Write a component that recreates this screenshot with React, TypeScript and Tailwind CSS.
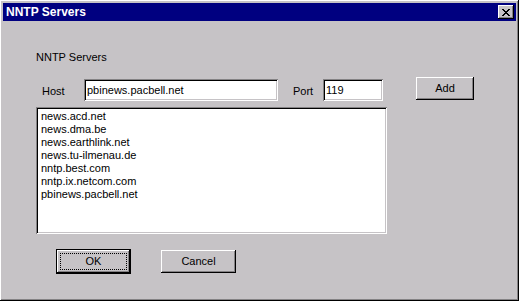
const servers = [
  'news.acd.net',
  'news.dma.be',
  'news.earthlink.net',
  'news.tu-ilmenau.de',
  'nntp.best.com',
  'nntp.ix.netcom.com',
  'pbinews.pacbell.net',
];

const raised =
  'shadow-[inset_-1px_-1px_#000,inset_1px_1px_#fff,inset_-2px_-2px_#848284,inset_2px_2px_#c6c3c6]';
const sunken =
  'shadow-[inset_1px_1px_#848284,inset_-1px_-1px_#fff,inset_2px_2px_#000,inset_-2px_-2px_#c6c3c6]';

function CloseGlyph() {
  // 8x7 pixel X, same as the classic caption button
  const rows = ['11000011', '01100110', '00111100', '00011000', '00111100', '01100110', '11000011'];
  return (
    <svg width="8" height="7" viewBox="0 0 8 7" shapeRendering="crispEdges">
      {rows.map((row, y) =>
        row.split('').map((c, x) =>
          c === '1' ? <rect key={`${x}-${y}`} x={x} y={y} width="1" height="1" fill="#000" /> : null
        )
      )}
    </svg>
  );
}

export default function App() {
  return (
    <div
      className={`w-[519px] h-[301px] bg-[#c6c3c6] p-[3px] flex flex-col text-black text-[11px] leading-[13px] ${raised}`}
      style={{ fontFamily: '"Liberation Sans", Arial, sans-serif' }}
    >
      {/* Title bar */}
      <div className="h-[18px] bg-[#000080] flex items-center justify-between pl-[3px] pr-[2px]">
        <span className="text-white font-bold text-[12px] leading-[14px]">NNTP Servers</span>
        <button className={`w-[16px] h-[14px] bg-[#c6c3c6] flex items-center justify-center ${raised}`}>
          <CloseGlyph />
        </button>
      </div>

      {/* Body */}
      <div className="pl-[33px] flex flex-col">
        <div className="mt-[30px] h-[13px]">NNTP Servers</div>

        <div className="mt-[13px] flex items-start">
          <span className="w-[48px] pl-[6px] mt-[8px]">Host</span>
          <div className={`w-[194px] h-[22px] mt-[2px] bg-white pl-[3px] flex items-center ${sunken}`}>
            pbinews.pacbell.net
          </div>
          <span className="w-[45px] pl-[15px] mt-[8px]">Port</span>
          <div className={`w-[60px] h-[22px] mt-[2px] bg-white pl-[3px] flex items-center ${sunken}`}>119</div>
          <button className={`ml-[33px] w-[58px] h-[23px] bg-[#c6c3c6] flex items-center justify-center ${raised}`}>
            Add
          </button>
        </div>

        <div className={`mt-[6px] w-[351px] h-[127px] bg-white pt-[3px] pl-[5px] ${sunken}`}>
          {servers.map((s) => (
            <div key={s} className="h-[13px]">
              {s}
            </div>
          ))}
        </div>

        <div className="mt-[15px] flex items-start">
          <button className="ml-[20px] w-[75px] h-[25px] border border-black">
            <div className={`w-full h-full bg-[#c6c3c6] p-[3px] ${raised}`}>
              <div className="w-full h-full border border-dotted border-black flex items-center justify-center">
                OK
              </div>
            </div>
          </button>
          <button
            className={`ml-[30px] mt-[1px] w-[75px] h-[23px] bg-[#c6c3c6] flex items-center justify-center ${raised}`}
          >
            Cancel
          </button>
        </div>
      </div>
    </div>
  );
}
